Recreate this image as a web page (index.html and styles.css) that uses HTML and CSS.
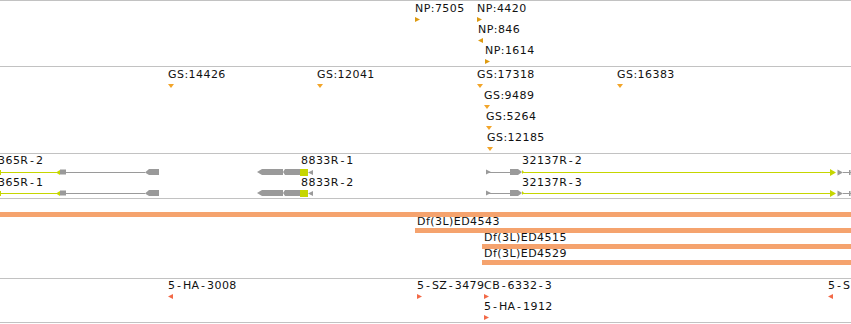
FILE: index.html
```html
<!DOCTYPE html>
<html>
<head>
<meta charset="utf-8">
<link rel="stylesheet" href="styles.css">
</head>
<body>
<div class="browser">
  <section class="track t-np">
    <div class="feat np" style="left:415px;top:2px"><span class="lbl">NP:7505</span><i class="mk right"></i></div>
    <div class="feat np" style="left:477px;top:2px"><span class="lbl">NP:4420</span><i class="mk right"></i></div>
    <div class="feat np" style="left:478px;top:23px"><span class="lbl">NP:846</span><i class="mk left"></i></div>
    <div class="feat np" style="left:485px;top:44px"><span class="lbl">NP:1614</span><i class="mk right"></i></div>
  </section>

  <section class="track t-gs">
    <div class="feat gs" style="left:168px;top:2px"><span class="lbl">GS:14426</span><i class="mk down"></i></div>
    <div class="feat gs" style="left:317px;top:2px"><span class="lbl">GS:12041</span><i class="mk down"></i></div>
    <div class="feat gs" style="left:477px;top:2px"><span class="lbl">GS:17318</span><i class="mk down"></i></div>
    <div class="feat gs" style="left:617px;top:2px"><span class="lbl">GS:16383</span><i class="mk down"></i></div>
    <div class="feat gs" style="left:484px;top:23px"><span class="lbl">GS:9489</span><i class="mk down"></i></div>
    <div class="feat gs" style="left:486px;top:44px"><span class="lbl">GS:5264</span><i class="mk down"></i></div>
    <div class="feat gs" style="left:487px;top:65px"><span class="lbl">GS:12185</span><i class="mk down"></i></div>
  </section>

  <section class="track t-genes">
    <svg class="models" width="851" height="44" viewBox="0 0 851 44">
      <defs>
        <g id="row">
          <rect class="y" x="0" y="18" width="58" height="1"/>
          <rect class="y" x="0" y="16" width="1" height="5"/>
          <polygon class="y" points="56,18.5 60,16 60,21"/>
          <rect class="g" x="60" y="15.5" width="6" height="5"/>
          <rect class="g" x="66" y="18" width="79" height="1"/>
          <polygon class="g" points="145,18.5 149,15 159,15 159,21 149,21"/>
          <polygon class="g" points="257,18 262,15 283,15 283,21 262,21"/>
          <polygon class="g" points="283,18 285,15 300,15 300,21 285,21"/>
          <rect class="y" x="300" y="15" width="8" height="7"/>
          <polygon class="g" points="308,18.5 313,16 313,21"/>
          <polygon class="g" points="486,15.5 491,18 486,20.5"/>
          <rect class="g" x="486" y="18" width="24" height="1"/>
          <polygon class="g" points="510,15 518,15 522,18 518,21 510,21"/>
          <rect class="y" x="522" y="18" width="308" height="1"/>
          <polygon class="y" points="522,16 524,18 522,20"/>
          <polygon class="y" points="830,15 836,18.5 830,22"/>
          <polygon class="g" points="837.5,15.5 843,18.5 837.5,21.5"/>
          <rect class="g" x="843" y="18" width="8" height="1"/>
          <rect class="g" x="849" y="16" width="1.5" height="5"/>
        </g>
      </defs>
      <use href="#row"/>
      <use href="#row" y="21"/>
    </svg>
    <span class="lbl glbl" style="left:-2px;top:1px">365R<span class="hy">-</span>2</span>
    <span class="lbl glbl" style="left:-2px;top:23px">365R<span class="hy">-</span>1</span>
    <span class="lbl glbl" style="left:301px;top:1px">8833R<span class="hy">-</span>1</span>
    <span class="lbl glbl" style="left:301px;top:23px">8833R<span class="hy">-</span>2</span>
    <span class="lbl glbl" style="left:522px;top:1px">32137R<span class="hy">-</span>2</span>
    <span class="lbl glbl" style="left:522px;top:23px">32137R<span class="hy">-</span>3</span>
  </section>

  <section class="track t-df">
    <div class="dfeat" style="left:0;top:13px"><i class="bar"></i></div>
    <div class="dfeat" style="left:415px;top:17px"><span class="lbl">Df(3L)ED4543</span><i class="bar"></i></div>
    <div class="dfeat" style="left:482px;top:33px"><span class="lbl">Df(3L)ED4515</span><i class="bar"></i></div>
    <div class="dfeat" style="left:482px;top:49px"><span class="lbl">Df(3L)ED4529</span><i class="bar"></i></div>
  </section>

  <section class="track t-ins">
    <div class="feat ins" style="left:168px;top:1px"><span class="lbl">5<span class="hy">-</span>HA<span class="hy">-</span>3008</span><i class="mk left"></i></div>
    <div class="feat ins" style="left:417px;top:1px"><span class="lbl">5<span class="hy">-</span>SZ<span class="hy">-</span>3479</span><i class="mk right"></i></div>
    <div class="feat ins" style="left:484px;top:1px"><span class="lbl">CB<span class="hy">-</span>6332<span class="hy">-</span>3</span><i class="mk right"></i></div>
    <div class="feat ins" style="left:484px;top:22px"><span class="lbl">5<span class="hy">-</span>HA<span class="hy">-</span>1912</span><i class="mk right"></i></div>
    <div class="feat ins" style="left:828px;top:1px"><span class="lbl">5<span class="hy">-</span>S</span><i class="mk left"></i></div>
  </section>
</div>
</body>
</html>
```
FILE: styles.css
```css
html, body {
  margin: 0;
  padding: 0;
  background: #ffffff;
}
body {
  width: 851px;
  height: 324px;
  overflow: hidden;
}
.browser {
  width: 851px;
  border-top: 1px solid #c2c2c2;
  display: flex;
  flex-direction: column;
}
.track {
  position: relative;
  overflow: hidden;
  border-bottom: 1px solid #c2c2c2;
}
.t-np { height: 65px; }
.t-gs { height: 86px; }
.t-genes { height: 44px; }
.t-df { height: 79px; }
.t-ins { height: 43px; }

.lbl {
  font-family: "DejaVu Sans", Verdana, sans-serif;
  font-size: 11px;
  line-height: 12px;
  letter-spacing: 0.45px;
  color: #111111;
  white-space: nowrap;
  display: block;
}
.hy {
  margin: 0 1.5px;
}

.feat {
  position: absolute;
  display: flex;
  flex-direction: column;
  align-items: flex-start;
}
.mk {
  display: block;
  margin-top: 2px;
  width: 5px;
  height: 5px;
}
.mk.right { clip-path: polygon(0 0, 100% 50%, 0 100%); }
.mk.left { clip-path: polygon(100% 0, 0 50%, 100% 100%); }
.mk.down { width: 6px; height: 4px; margin-top: 3px; clip-path: polygon(0 0, 100% 0, 50% 100%); }

.np .mk { background: #dd9a10; }
.gs .mk { background: #f2a52a; }
.ins .mk { background: #f26a48; }

.models {
  position: absolute;
  left: 0;
  top: 0;
  display: block;
}
.models .y { fill: #c6d600; }
.models .g { fill: #9a9a9a; }
.glbl {
  position: absolute;
}

.dfeat {
  position: absolute;
  right: 0;
  display: flex;
  flex-direction: column;
}
.dfeat .lbl { padding-left: 2px; }
.bar {
  display: block;
  height: 5px;
  background: #f5a36e;
}
```
